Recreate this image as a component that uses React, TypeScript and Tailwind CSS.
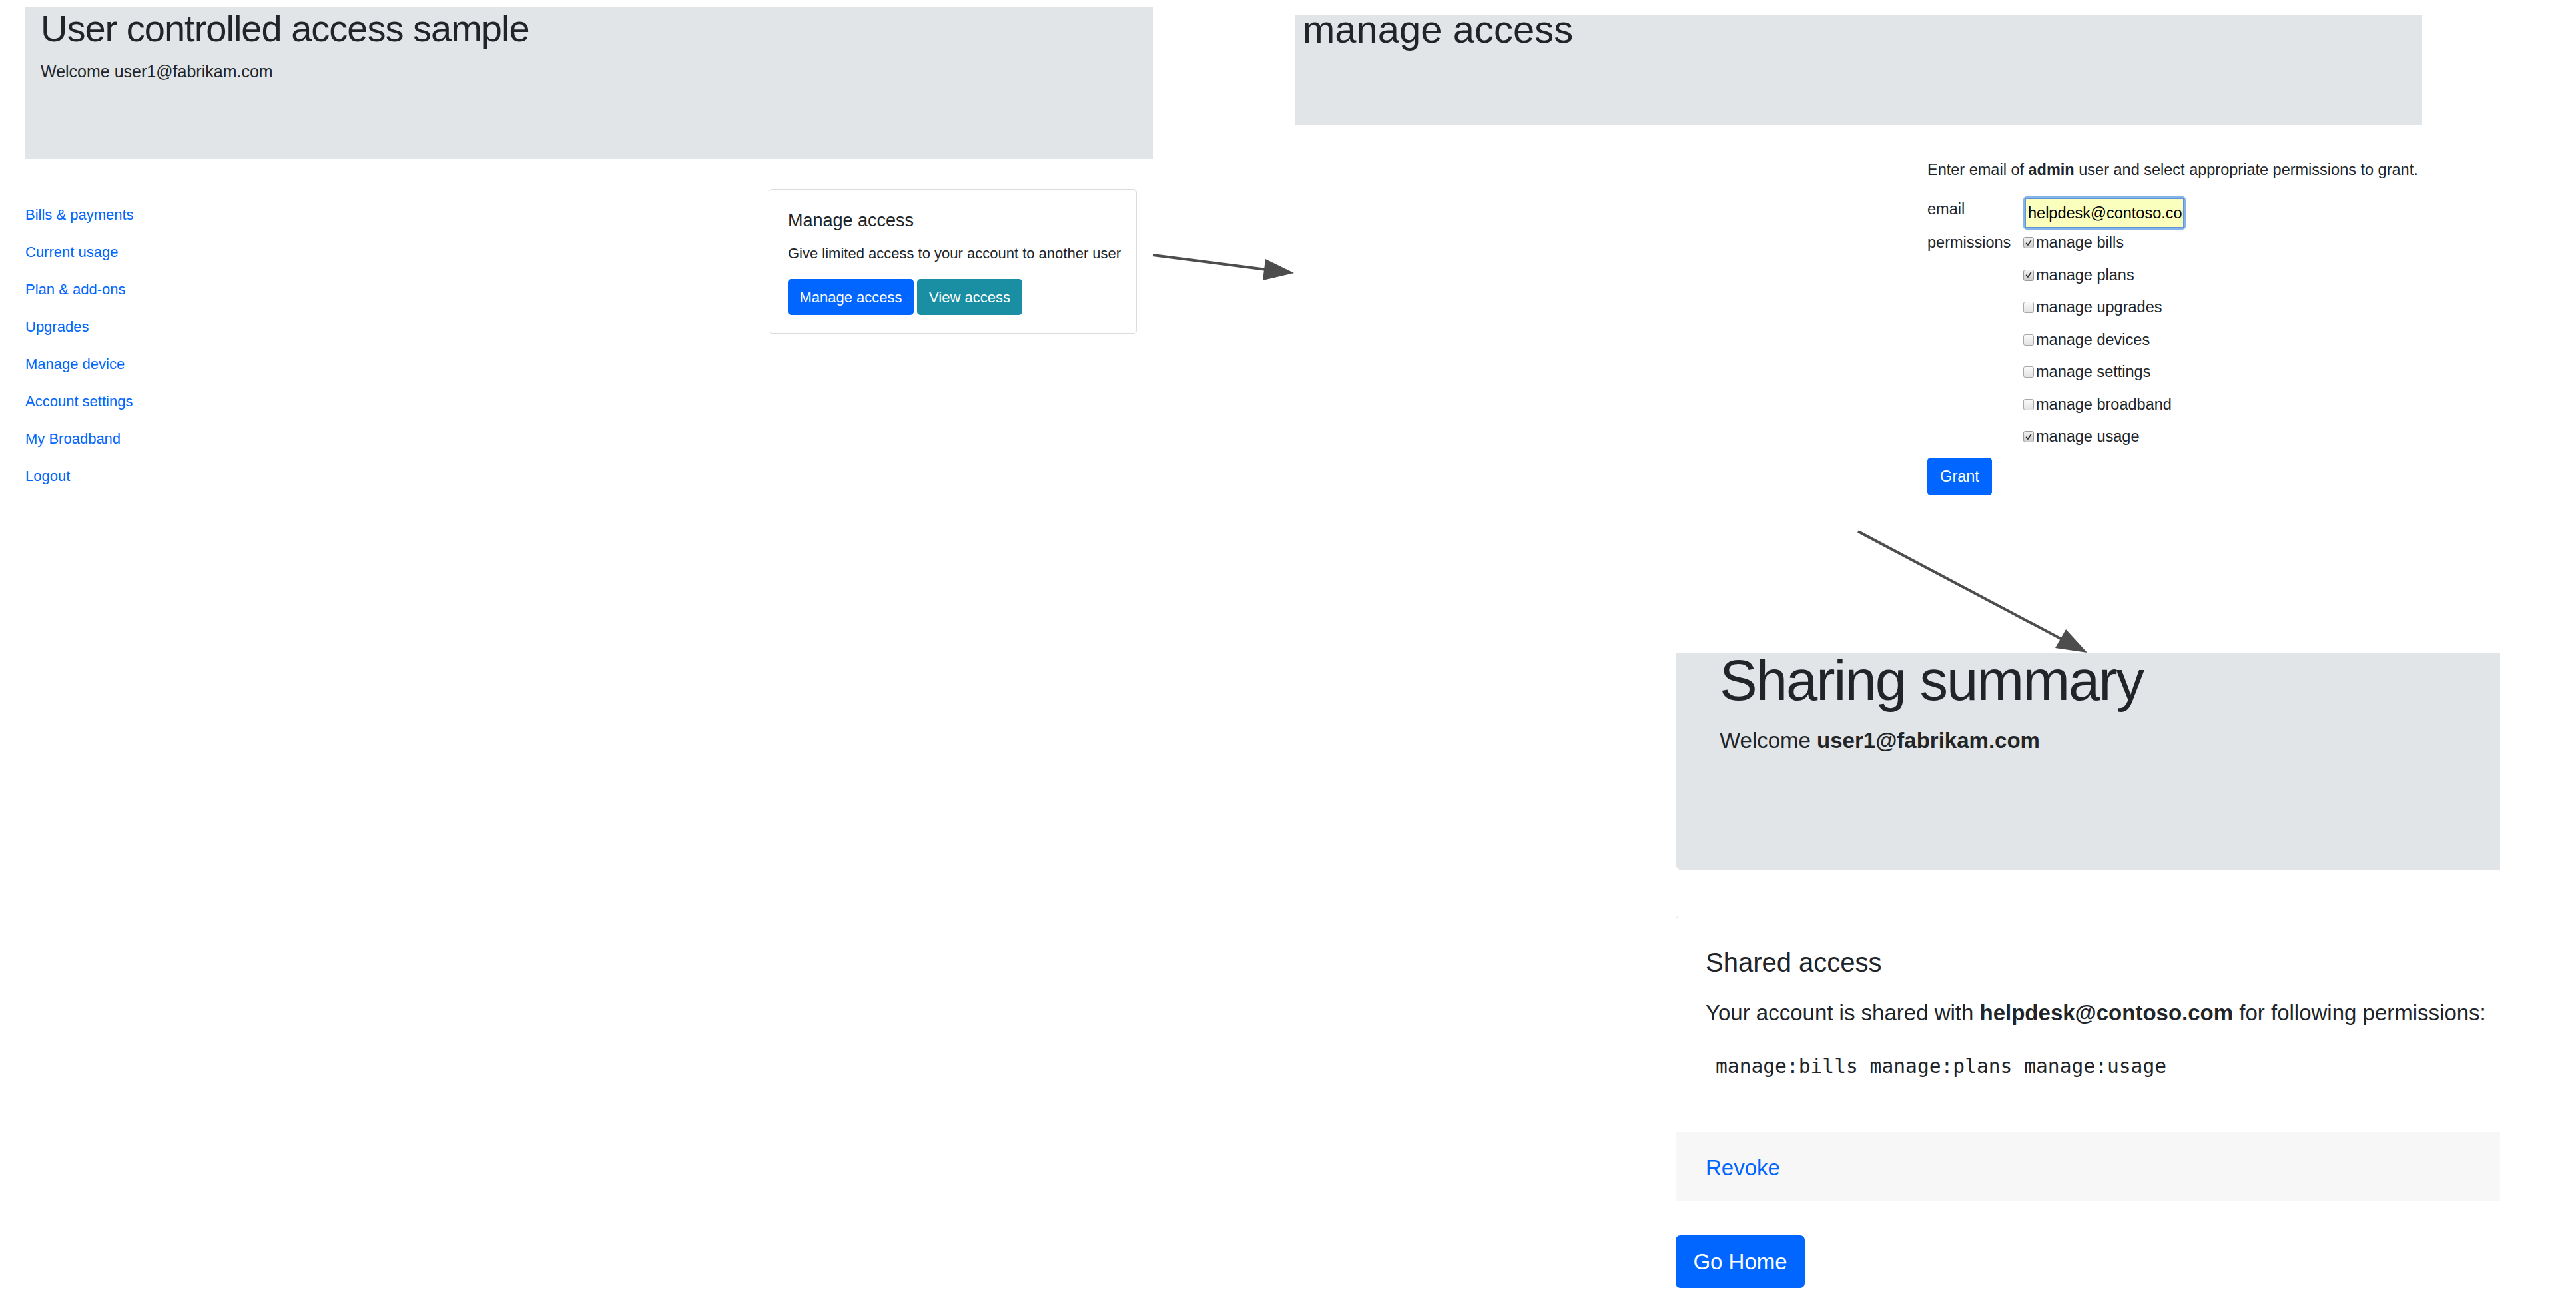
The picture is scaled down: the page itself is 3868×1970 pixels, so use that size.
import React from "react";

const links = [
  "Bills & payments",
  "Current usage",
  "Plan & add-ons",
  "Upgrades",
  "Manage device",
  "Account settings",
  "My Broadband",
  "Logout",
];

const perms: { label: string; checked: boolean }[] = [
  { label: "manage bills", checked: true },
  { label: "manage plans", checked: true },
  { label: "manage upgrades", checked: false },
  { label: "manage devices", checked: false },
  { label: "manage settings", checked: false },
  { label: "manage broadband", checked: false },
  { label: "manage usage", checked: true },
];

function Check({ checked }: { checked: boolean }) {
  if (checked) {
    return (
      <span className="inline-flex h-[17px] w-[16px] shrink-0 items-center justify-center rounded-[3px] border border-[#9a9a9a] bg-linear-to-b from-[#f2f2f2] to-[#cdcdcd]">
        <svg viewBox="0 0 16 16" className="h-[12px] w-[12px]">
          <path d="M3.5 8.5 L6.5 12 L12.5 3.5" fill="none" stroke="#2a2a2a" strokeWidth="2.4" strokeLinecap="round" strokeLinejoin="round" />
        </svg>
      </span>
    );
  }
  return (
    <span className="inline-block h-[17px] w-[16px] shrink-0 rounded-[3px] border border-[#a8a8a8] bg-linear-to-b from-[#fbfbfb] to-[#e2e2e2]" />
  );
}

export default function App() {
  return (
    <div className="relative h-[1970px] w-[3868px] overflow-hidden bg-white text-[#212529] [font-family:Liberation_Sans,Arial,sans-serif]">
      {/* Panel 1 */}
      <section className="absolute left-[37px] top-[10px] flex w-[1695px] flex-col">
        <div className="flex h-[229px] flex-col bg-[#e1e5e8] pl-[24px]">
          <h1 className="-mt-px text-[56px] leading-[1.2] tracking-[-1px]">User controlled access sample</h1>
          <p className="mt-[13px] text-[25px] leading-[1.5]">Welcome user1@fabrikam.com</p>
        </div>
        <div className="flex">
          <nav className="mt-[56px] flex w-[1117px] flex-col pl-[1px]">
            {links.map((l) => (
              <a key={l} className="h-[56px] text-[22px] leading-[56px] text-[#0066ff]">
                {l}
              </a>
            ))}
          </nav>
          <div className="mt-[45px] flex h-[217px] w-[553px] flex-col rounded-[5px] border border-[#dcdcdc] pl-[28px] pr-[16px] pt-[30px]">
            <h5 className="text-[27px] leading-[1.2]">Manage access</h5>
            <p className="mt-[17px] whitespace-nowrap text-[22px] leading-[1.5]">Give limited access to your account to another user</p>
            <div className="mt-[22px] flex gap-[5px]">
              <button className="h-[54px] w-[189px] rounded-[5px] bg-[#0066ff] text-[22px] text-white">Manage access</button>
              <button className="h-[54px] w-[158px] rounded-[5px] bg-[#1a8fa3] text-[22px] text-white">View access</button>
            </div>
          </div>
        </div>
      </section>

      {/* Panel 2 */}
      <section className="absolute left-[1944px] top-[23px] flex w-[1693px] flex-col">
        <div className="flex h-[165px] flex-col bg-[#e1e5e8] pl-[12px]">
          <h1 className="text-[58px] leading-[42px]">manage access</h1>
        </div>
        <div className="ml-[950px] mt-[50px] flex flex-col items-start text-[23.5px] leading-[35px]">
          <p className="whitespace-nowrap">
            Enter email of <b>admin</b> user and select appropriate permissions to grant.
          </p>
          <div className="mt-[22px] grid grid-cols-[144px_auto]">
            <div className="pt-[2px]">email</div>
            <div className="h-[50px] w-[244px] rounded-[5px] border-[3px] border-[#86b3ea] p-0">
              <input
                readOnly
                value="helpdesk@contoso.com"
                className="h-full w-full border border-[#5f94d8] bg-[#faffbd] pl-[3px] text-[23.5px] text-black outline-none"
              />
            </div>
            <div className="mt-[2px]">permissions</div>
            <div className="mt-[2px] flex flex-col gap-[13.5px]">
              {perms.map((p) => (
                <div key={p.label} className="flex h-[35px] items-center gap-[3px] whitespace-nowrap">
                  <Check checked={p.checked} />
                  <span>{p.label}</span>
                </div>
              ))}
            </div>
          </div>
          <button className="mt-[14px] h-[57px] w-[97px] rounded-[5px] bg-[#0066ff] text-[23.5px] text-white">Grant</button>
        </div>
      </section>

      {/* Panel 3 */}
      <section className="absolute left-[2516px] top-[981px] flex w-[1238px] flex-col">
        <div className="flex h-[326px] flex-col rounded-bl-[10px] bg-[#e1e5e8] pl-[66px]">
          <h1 className="text-[85px] leading-[81px] tracking-[-2px]">Sharing summary</h1>
          <p className="mt-[25px] text-[33px] leading-[1.5]">
            Welcome <b>user1@fabrikam.com</b>
          </p>
        </div>
        <div className="mt-[68px] w-full overflow-hidden">
          <div className="w-[1300px] rounded-[6px] border border-[#dcdcdc]">
            <div className="px-[44px] pb-[76px] pt-[45px]">
              <h5 className="text-[40px] leading-[1.2]">Shared access</h5>
              <p className="mt-[27px] whitespace-nowrap text-[33px] leading-[1.5]">
                Your account is shared with <b>helpdesk@contoso.com</b> for following permissions:
              </p>
              <pre className="mt-[33px] pl-[15px] text-[29.6px] leading-[44px] [font-family:DejaVu_Sans_Mono,monospace]">manage:bills manage:plans manage:usage</pre>
            </div>
            <div className="border-t border-[#dcdcdc] bg-[#f7f7f7] px-[44px] pb-[25px] pt-[29px] text-[33px] leading-[1.5] text-[#0066ff]">Revoke</div>
          </div>
        </div>
        <button className="mt-[51px] h-[79px] w-[194px] self-start rounded-[7px] bg-[#0066ff] text-[33px] text-white">Go Home</button>
      </section>

      {/* Arrows */}
      <svg className="pointer-events-none absolute inset-0 h-full w-full" viewBox="0 0 3868 1970">
        <line x1="1731" y1="383" x2="1902" y2="405" stroke="#4d4d4d" strokeWidth="4" />
        <polygon points="1900,389 1896,421 1943,410" fill="#4d4d4d" />
        <line x1="2790" y1="798" x2="3096" y2="960" stroke="#4d4d4d" strokeWidth="4" />
        <polygon points="3086,973 3102,945 3134,980" fill="#4d4d4d" />
      </svg>
    </div>
  );
}
